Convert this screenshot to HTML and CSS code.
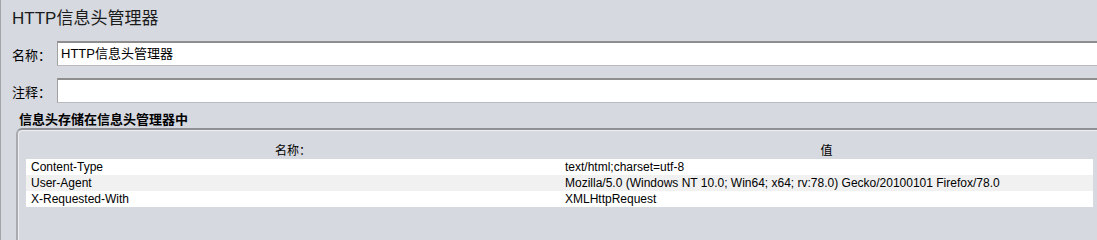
FILE: index.html
```html
<!DOCTYPE html>
<html>
<head>
  <meta charset="UTF-8">
  <title>HTTP信息头管理器</title>
  <link rel="stylesheet" href="styles.css">
</head>
<body>
  <div class="panel">
    <h2 class="title">HTTP信息头管理器</h2>

    <div class="fields">
      <div class="field">
        <label>名称：</label>
        <div class="input">HTTP信息头管理器</div>
      </div>
      <div class="field">
        <label>注释：</label>
        <div class="input"></div>
      </div>
    </div>

    <div class="group-title">信息头存储在信息头管理器中</div>
    <div class="group">
      <table class="headers">
        <thead>
          <tr>
            <th class="col-name">名称：</th>
            <th>值</th>
          </tr>
        </thead>
        <tbody>
          <tr><td>Content-Type</td><td>text/html;charset=utf-8</td></tr>
          <tr><td>User-Agent</td><td>Mozilla/5.0 (Windows NT 10.0; Win64; x64; rv:78.0) Gecko/20100101 Firefox/78.0</td></tr>
          <tr><td>X-Requested-With</td><td>XMLHttpRequest</td></tr>
        </tbody>
      </table>
    </div>
  </div>
</body>
</html>
```

FILE: styles.css
```css
body {
  margin: 0;
  background: #d6d9df;
  font-family: "Liberation Sans", "Noto Sans CJK SC", sans-serif;
  font-size: 12px;
  color: #000;
  overflow: hidden;
}

.panel {
  height: 240px;
  overflow: hidden;
  border-left: 1px solid #a4a6aa;
  padding-left: 11px;
  box-sizing: border-box;
}

.title {
  margin: 0;
  padding-top: 8px;
  height: 41px;
  box-sizing: border-box;
  font-size: 17px;
  font-weight: normal;
  line-height: 22px;
  color: #1b1b1b;
}

.fields {
  display: flex;
  flex-direction: column;
  gap: 12px;
  margin-right: -20px;
}

.field {
  display: flex;
  align-items: center;
  height: 25px;
}

.field label {
  width: 45px;
  font-size: 13px;
  padding-top: 1px;
}

.input {
  flex: 1;
  height: 25px;
  box-sizing: border-box;
  background: #fff;
  border-top: 2px solid #8e8e8e;
  border-left: 1px solid #a0a0a0;
  border-bottom: 1px solid #b9bbbf;
  padding-left: 3px;
  font-size: 13px;
  line-height: 21px;
}

.group-title {
  margin-left: 7px;
  margin-top: 9px;
  font-weight: bold;
  font-size: 13px;
  line-height: 16px;
}

.group {
  margin-left: 4px;
  margin-right: -20px;
  height: 100px;
  border-top: 2px solid #8f9094;
  border-left: 2px solid #a9abaf;
  border-top-left-radius: 6px;
  box-shadow: inset 1px 1px 0 #eceef2;
  padding: 13px 0 0 8px;
}

.headers {
  width: 1067px;
  border-collapse: collapse;
  table-layout: fixed;
}

.headers th {
  font-weight: normal;
  font-size: 12px;
  height: 16px;
  line-height: 16px;
  padding: 0;
}

.headers th.col-name {
  width: 534px;
}

.headers td {
  height: 16px;
  line-height: 16px;
  padding: 0 0 0 5px;
  background: #fff;
  white-space: nowrap;
}

.headers tbody tr:nth-child(2) td {
  background: #f1f1f1;
}
```
